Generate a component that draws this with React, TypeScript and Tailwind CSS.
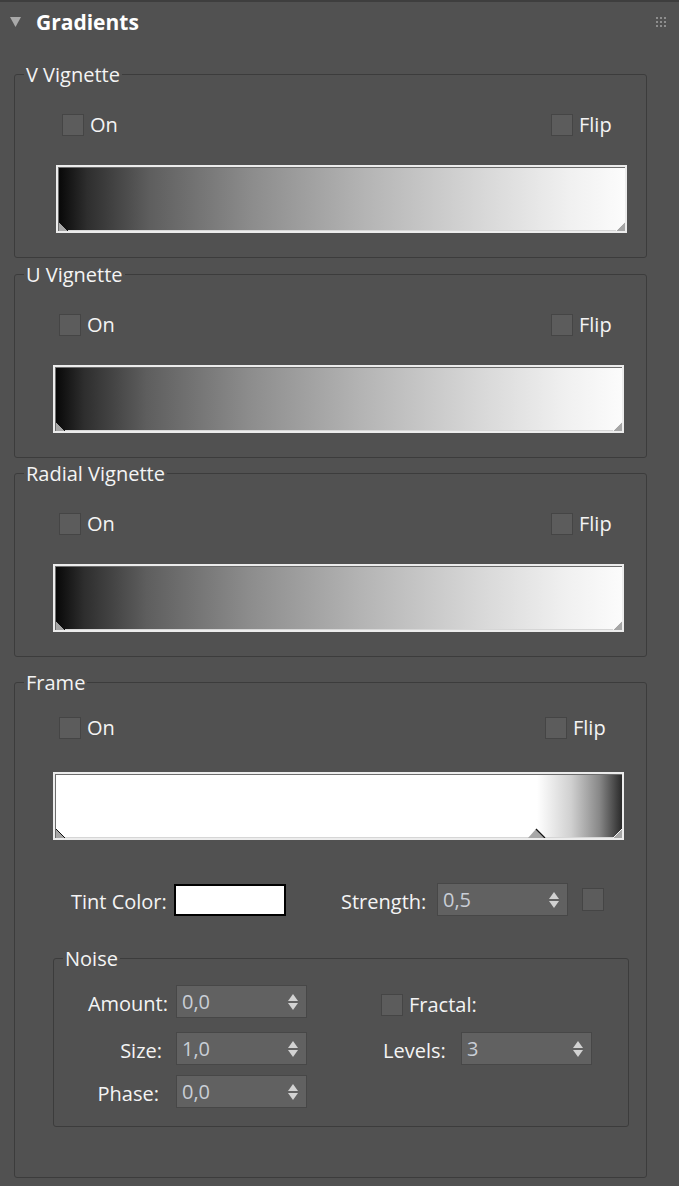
import React from "react";

const FONT = "font-['Open_Sans','Noto_Sans',sans-serif]";

function Checkbox() {
  return <div className="h-[22px] w-[22px] shrink-0 border border-[#454545] bg-[#5c5c5c]" />;
}

function Check({ label }: { label: string }) {
  return (
    <div className="flex items-center">
      <Checkbox />
      <span className="ml-[6px] leading-[22px]">{label}</span>
    </div>
  );
}

function Spinner({ value }: { value: string }) {
  return (
    <div className="flex h-[33px] w-[131px] shrink-0 items-center justify-between border border-[#474747] bg-[#616161] pl-[5px] pr-[7px] text-[#c9ced6]">
      <span className="leading-[24px]">{value}</span>
      <svg width="12" height="18" viewBox="0 0 12 18">
        <polygon points="6,1 11,8 1,8" fill="#d2d2d2" />
        <polygon points="1,10 11,10 6,17" fill="#d2d2d2" />
      </svg>
    </div>
  );
}

function GradientBar({ kind }: { kind: "fade" | "frame" }) {
  const bg =
    kind === "fade"
      ? "bg-[linear-gradient(to_right,#080808_0%,#2e2e2e_5%,#5e5e5e_16%,#8c8c8c_34%,#b4b4b4_54%,#d6d6d6_74%,#f0f0f0_90%,#fcfcfc_100%)]"
      : "bg-[linear-gradient(to_right,#fff_0%,#fff_85%,#d0d0d0_91%,#888_96%,#2a2a2a_100%)]";
  return (
    <div className="h-[68px] w-[571px] border-2 border-[#ececec]">
      <div className={`relative h-full w-full border-l border-t border-[#6c6c6c] ${bg}`}>
        <div className="absolute bottom-0 left-0 right-0 h-px bg-[#d6d6d6]" />
        <svg className="absolute bottom-0 left-0" width="10" height="10" viewBox="0 0 10 10">
          <polygon points="0,1 9,10 0,10" fill="#a6a6a6" />
          <line x1="0" y1="1" x2="9" y2="10" stroke="#111" strokeWidth="1" />
        </svg>
        <svg className="absolute bottom-0 right-0" width="10" height="10" viewBox="0 0 10 10">
          <polygon points="10,1 1,10 10,10" fill="#a6a6a6" />
          <line x1="10" y1="1" x2="1" y2="10" stroke="#f4f4f4" strokeWidth="1" />
        </svg>
        {kind === "frame" && (
          <svg className="absolute bottom-0 left-[471px]" width="20" height="10" viewBox="0 0 20 10">
            <polygon points="1,10 9,1 18,10" fill="#a6a6a6" />
            <line x1="9" y1="1" x2="18" y2="10" stroke="#111" strokeWidth="1.2" />
          </svg>
        )}
      </div>
    </div>
  );
}

function Group({
  title,
  className,
  children,
}: {
  title: string;
  className?: string;
  children: React.ReactNode;
}) {
  return (
    <fieldset className={`rounded-[3px] border border-[#3c3c3c] ${className ?? ""}`}>
      <legend className="ml-[9px] px-[2px] pt-[2px] leading-[20px]">{title}</legend>
      {children}
    </fieldset>
  );
}

function VignetteGroup({
  title,
  className,
  inset,
}: {
  title: string;
  className: string;
  inset: "a" | "b";
}) {
  return (
    <Group title={title} className={className}>
      <div className={`flex ${inset === "a" ? "ml-[47px] mt-[29px]" : "ml-[44px] mt-[29px]"}`}>
        <div className={inset === "a" ? "w-[489px]" : "w-[492px]"}>
          <Check label="On" />
        </div>
        <Check label="Flip" />
      </div>
      <div className={`${inset === "a" ? "ml-[41px]" : "ml-[38px]"} mt-[29px] pb-[24px]`}>
        <GradientBar kind="fade" />
      </div>
    </Group>
  );
}

const LABEL = "pt-[4px] leading-[24px]";

export default function App() {
  return (
    <div
      className={`${FONT} h-[1186px] w-[679px] overflow-hidden border-t-2 border-[#3e3e3e] bg-[#515151] text-[20px] text-[#f4f4f4]`}
    >
      <div className="flex h-[39px] items-center justify-between pl-[10px] pr-[13px]">
        <div className="flex items-center">
          <svg width="11" height="10" viewBox="0 0 11 10">
            <polygon points="0,0 11,0 5.5,10" fill="#a9a9a9" />
          </svg>
          <span className="ml-[15px] text-[21px] font-bold leading-[26px] text-white">Gradients</span>
        </div>
        <svg width="10" height="10" viewBox="0 0 10 10">
          {[0, 4, 8].map((y) =>
            [0, 4, 8].map((x) => (
              <rect key={`${x}-${y}`} x={x} y={y} width="2" height="2" fill="#8e8e8e" />
            )),
          )}
        </svg>
      </div>

      <div className="ml-[14px] w-[633px]">
        <VignetteGroup title="V Vignette" className="mt-[22px]" inset="a" />
        <VignetteGroup title="U Vignette" className="mt-[5px]" inset="b" />
        <VignetteGroup title="Radial Vignette" className="mt-[4px]" inset="b" />

        <Group title="Frame" className="mt-[14px] pb-[50px]">
          <div className="ml-[44px] mt-[24px] flex">
            <div className="w-[486px]">
              <Check label="On" />
            </div>
            <Check label="Flip" />
          </div>
          <div className="ml-[38px] mt-[33px]">
            <GradientBar kind="frame" />
          </div>

          <div className="mt-[43px] flex h-[33px] items-center">
            <span className={`ml-[56px] w-[103px] ${LABEL}`}>Tint Color:</span>
            <div className="h-[32px] w-[112px] border-2 border-black bg-white" />
            <span className={`ml-[55px] w-[96px] ${LABEL}`}>Strength:</span>
            <Spinner value="0,5" />
            <div className="ml-[14px] h-[23px] w-[22px] border border-[#454545] bg-[#5c5c5c]" />
          </div>

          <Group title="Noise" className="ml-[38px] mt-[31px] w-[576px] pb-[18px]">
            <div className="mt-[16px] flex h-[33px] items-center">
              <div className="flex w-[327px] items-center">
                <span className={`w-[114px] text-right ${LABEL}`}>Amount:</span>
                <div className="ml-[8px]">
                  <Spinner value="0,0" />
                </div>
              </div>
              <div className="pt-[6px]">
                <Check label="Fractal:" />
              </div>
            </div>
            <div className="mt-[14px] flex h-[33px] items-center">
              <div className="flex w-[329px] items-center">
                <span className={`w-[114px] pr-[6px] text-right ${LABEL}`}>Size:</span>
                <div className="ml-[8px]">
                  <Spinner value="1,0" />
                </div>
              </div>
              <span className={`w-[78px] ${LABEL}`}>Levels:</span>
              <Spinner value="3" />
            </div>
            <div className="mt-[10px] flex h-[33px] items-center">
              <span className={`w-[114px] pr-[9px] text-right ${LABEL}`}>Phase:</span>
              <div className="ml-[8px]">
                <Spinner value="0,0" />
              </div>
            </div>
          </Group>
        </Group>
      </div>
    </div>
  );
}
